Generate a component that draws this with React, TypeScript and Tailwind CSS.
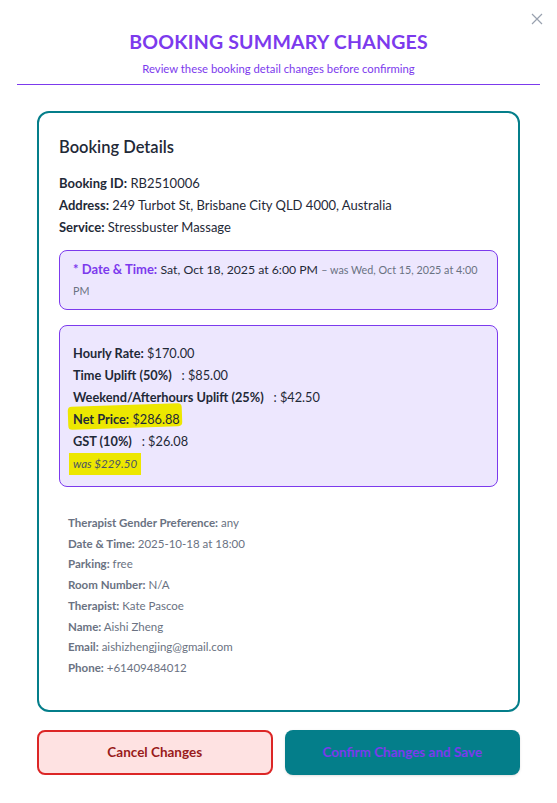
import React from "react";

const font = { fontFamily: 'Lato, "Noto Sans", sans-serif' };

function Row({ label, value }: { label: string; value: string }) {
  return (
    <p className="leading-[22px]">
      <span className="font-bold">{label}</span> {value}
    </p>
  );
}

function GrayRow({ label, value }: { label: string; value: string }) {
  return (
    <p className="leading-[20.7px]">
      <span className="font-bold">{label}</span> {value}
    </p>
  );
}

export default function App() {
  return (
    <div className="min-h-screen w-[557px] bg-white relative" style={font}>
      <button className="absolute right-[14px] top-[13px] text-gray-400" aria-label="Close">
        <svg width="12" height="12" viewBox="0 0 12 12" fill="none" stroke="currentColor" strokeWidth="1.2">
          <path d="M1 1l10 10M11 1L1 11" />
        </svg>
      </button>

      <div className="pt-[29px] text-center">
        <h1 className="text-[19.5px] leading-[26px] font-bold tracking-[0.2px] text-[#7c3aed]">
          BOOKING SUMMARY CHANGES
        </h1>
        <p className="mt-[6px] text-[11.3px] leading-[16px] text-[#7c3aed]">
          Review these booking detail changes before confirming
        </p>
      </div>
      <div className="mx-[17px] mt-[7px] h-px bg-[#7c3aed]" />

      <div className="mx-[37px] mt-[26px] rounded-xl border-2 border-[#047e8a] px-[20px] pt-[22px] pb-[31px]">
        <h2 className="text-[16.5px] leading-[24px] font-semibold text-[#1f2937]">Booking Details</h2>

        <div className="mt-[13px] text-[13px] text-[#1f2937]">
          <Row label="Booking ID:" value="RB2510006" />
          <Row label="Address:" value="249 Turbot St, Brisbane City QLD 4000, Australia" />
          <Row label="Service:" value="Stressbuster Massage" />
        </div>

        <div className="mt-[12px] rounded-lg border border-[#7c3aed] bg-[#ede7fe] px-[13px] py-[8px] text-[13px] leading-[20px] text-[#1f2937]">
          <span className="font-bold text-[#7c3aed]">* Date &amp; Time:</span>{" "}
          <span className="text-[12.25px]">Sat, Oct 18, 2025 at 6:00 PM</span>{" "}
          <span className="text-[10.75px] leading-[20px] text-gray-500">– was Wed, Oct 15, 2025 at 4:00 PM</span>
        </div>

        <div className="mt-[15px] rounded-lg border border-[#7c3aed] bg-[#ede7fe] px-[13px] pt-[16px] pb-[11px] text-[12.75px] leading-[22px] text-[#1f2937]">
          <p><span className="font-bold">Hourly Rate:</span> $170.00</p>
          <p><span className="font-bold">Time Uplift (50%)</span> &nbsp; : $85.00</p>
          <p><span className="font-bold">Weekend/Afterhours Uplift (25%)</span> &nbsp; : $42.50</p>
          <p>
            <span className="relative inline-block">
              <span className="absolute -left-[5px] -right-[2px] top-[-3px] bottom-[2px] -rotate-[2deg] rounded-[4px] bg-[#ede700]" />
              <span className="relative"><span className="font-bold">Net Price:</span> $286.88</span>
            </span>
          </p>
          <p><span className="font-bold">GST (10%)</span> &nbsp; : $26.08</p>
          <p>
            <span className="-ml-[4px] inline-block bg-[#ede700] px-[4px] text-[11.5px] italic text-gray-600">was $229.50</span>
          </p>
        </div>

        <div className="mt-[26px] pl-[9px] text-[11.5px] text-gray-500">
          <GrayRow label="Therapist Gender Preference:" value="any" />
          <GrayRow label="Date & Time:" value="2025-10-18 at 18:00" />
          <GrayRow label="Parking:" value="free" />
          <GrayRow label="Room Number:" value="N/A" />
          <GrayRow label="Therapist:" value="Kate Pascoe" />
          <GrayRow label="Name:" value="Aishi Zheng" />
          <GrayRow label="Email:" value="aishizhengjing@gmail.com" />
          <GrayRow label="Phone:" value="+61409484012" />
        </div>
      </div>

      <div className="mx-[37px] mt-[18px] grid grid-cols-2 gap-[12px]">
        <button className="h-[45px] rounded-lg border-2 border-[#dc2626] bg-[#fee2e2] text-[13.5px] font-bold text-[#991b1b]">
          Cancel Changes
        </button>
        <button className="h-[45px] rounded-lg bg-[#047e8a] text-[13.5px] font-bold text-[#7c3aed] shadow-sm">
          Confirm Changes and Save
        </button>
      </div>
    </div>
  );
}
